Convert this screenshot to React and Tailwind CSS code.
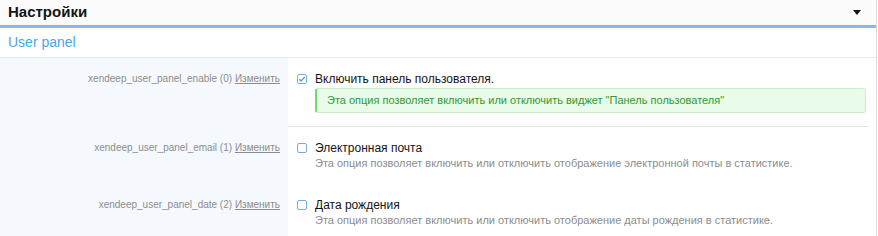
const rows = [
  {
    key: "xendeep_user_panel_enable",
    idx: 0,
    title: "Включить панель пользователя.",
    checked: true,
    hint: 'Эта опция позволяет включить или отключить виджет "Панель пользователя"',
    divider: true,
  },
  {
    key: "xendeep_user_panel_email",
    idx: 1,
    title: "Электронная почта",
    desc: "Эта опция позволяет включить или отключить отображение электронной почты в статистике.",
  },
  {
    key: "xendeep_user_panel_date",
    idx: 2,
    title: "Дата рождения",
    desc: "Эта опция позволяет включить или отключить отображение даты рождения в статистике.",
  },
];

function Checkbox({ checked }) {
  return (
    <span className="flex items-center justify-center w-[10px] h-[10px] border border-[#79ade0] rounded-[2px] bg-white shrink-0">
      {checked && (
        <svg width="8" height="8" viewBox="0 0 8 8">
          <path d="M1.2 4.2 L3.1 6 L6.8 1.8" fill="none" stroke="#3d8fdc" strokeWidth="1.2" />
        </svg>
      )}
    </span>
  );
}

function OptionRow({ row }) {
  return (
    <div className="flex">
      <div className="w-[288px] shrink-0 bg-[#f5f9fe] pt-[12px] pr-[8px] text-right text-[10px] leading-[17px] text-[#8c8c8c]">
        {row.key} ({row.idx}){" "}
        <a href="#" className="underline text-[#8c8c8c]">Изменить</a>
      </div>
      <div className="flex-1 pr-[8px]">
        <div className={row.divider ? "pt-[12px] pb-[13px] border-b border-[#e3e3e3]" : "pt-[12px] pb-[14px]"}>
          <div className="flex items-center h-[17px] pl-[9px] gap-[8px] text-[12px] text-[#141414]">
            <Checkbox checked={row.checked} />
            <span>{row.title}</span>
          </div>
          {row.hint && (
            <div className="ml-[27px] mt-[1px] mr-[2px] h-[25px] flex items-center pl-[10px] bg-[#e9fbe9] border border-[#c9efc9] border-l-[2px] border-l-[#72d872] rounded-[3px] text-[11px] text-[#2f9a2f]">
              {row.hint}
            </div>
          )}
          {row.desc && (
            <div className="ml-[27px] h-[14px] leading-[14px] text-[11px] text-[#8c8c8c]">{row.desc}</div>
          )}
        </div>
      </div>
    </div>
  );
}

export default function App() {
  return (
    <div className="w-[877px] h-[236px] overflow-hidden bg-white border-r border-[#dcdcdc] font-['Liberation_Sans',Arial,sans-serif]">
      <div className="h-[28px] flex items-center justify-between pl-[8px] pr-[15px] bg-[#fbfbfb] border-b-[3px] border-[#8cb6e9]">
        <h2 className="text-[15px] font-bold text-[#141414]">Настройки</h2>
        <span className="w-0 h-0 border-x-[4px] border-x-transparent border-t-[5px] border-t-[#141414]" />
      </div>
      <div className="h-[30px] flex items-center pl-[8px] border-b border-[#ececec] text-[14px] text-[#47a6ea]">
        User panel
      </div>
      {rows.map((r) => (
        <OptionRow key={r.key} row={r} />
      ))}
    </div>
  );
}
